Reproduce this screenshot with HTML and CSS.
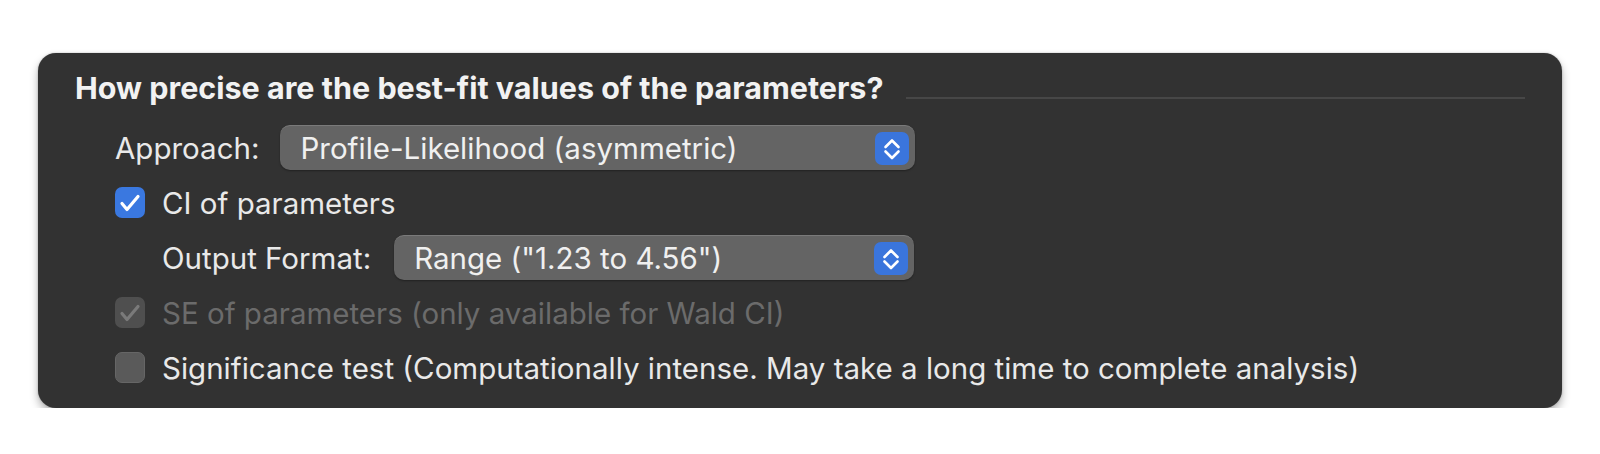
FILE: index.html
```html
<!DOCTYPE html>
<html>
<head>
<meta charset="utf-8">
<link rel="stylesheet" href="styles.css">
</head>
<body>
<div class="panel">
  <div class="heading-row">
    <div class="heading">How precise are the best-fit values of the parameters?</div>
    <div class="rule"></div>
  </div>
  <div class="rows">
    <div class="row indent1">
      <span class="label">Approach:</span>
      <div class="popup">
        <span class="popup-text">Profile-Likelihood (asymmetric)</span>
        <span class="stepper"><svg viewBox="0 0 34 33" width="34" height="33"><path d="M10.5 15 L17 8.5 L23.5 15 M10.5 19.5 L17 26 L23.5 19.5" fill="none" stroke="#fff" stroke-width="2.6" stroke-linecap="round" stroke-linejoin="round"/></svg></span>
      </div>
    </div>
    <div class="row indent1">
      <span class="checkbox checked"><svg viewBox="0 0 30 31" width="30" height="31"><path d="M7 16.5 L12 22.5 L23 9.5" fill="none" stroke="#fff" stroke-width="3.2" stroke-linecap="round" stroke-linejoin="round"/></svg></span>
      <span class="label">CI of parameters</span>
    </div>
    <div class="row indent2">
      <span class="label">Output Format:</span>
      <div class="popup popup-short">
        <span class="popup-text">Range ("1.23 to 4.56")</span>
        <span class="stepper"><svg viewBox="0 0 34 33" width="34" height="33"><path d="M10.5 15 L17 8.5 L23.5 15 M10.5 19.5 L17 26 L23.5 19.5" fill="none" stroke="#fff" stroke-width="2.6" stroke-linecap="round" stroke-linejoin="round"/></svg></span>
      </div>
    </div>
    <div class="row indent1 disabled">
      <span class="checkbox dis"><svg viewBox="0 0 30 31" width="30" height="31"><path d="M7 16.5 L12 22.5 L23 9.5" fill="none" stroke="#7a7a7a" stroke-width="3.2" stroke-linecap="round" stroke-linejoin="round"/></svg></span>
      <span class="label">SE of parameters (only available for Wald CI)</span>
    </div>
    <div class="row indent1">
      <span class="checkbox empty"></span>
      <span class="label">Significance test (Computationally intense. May take a long time to complete analysis)</span>
    </div>
  </div>
</div>
</body>
</html>
```
FILE: styles.css
```css
* { box-sizing: border-box; }
html, body { margin: 0; padding: 0; background: #ffffff; }
body {
  font-family: Inter, "Noto Sans", "Liberation Sans", sans-serif;
  color: #ececec;
}
.panel {
  margin: 53px 0 0 38px;
  width: 1524px;
  height: 355px;
  background: #323232;
  border-radius: 18px;
  box-shadow: 0 5px 9px rgba(0,0,0,0.3), 0 0 2px rgba(0,0,0,0.25);
  padding: 20px 37px 0 37px;
}
.heading-row {
  display: flex;
  align-items: flex-end;
  height: 30px;
  margin-bottom: 22px;
}
.heading {
  font-size: 30.5px;
  font-weight: 700;
  line-height: 30px;
  color: #f2f2f2;
  white-space: nowrap;
}
.rule {
  flex: 1;
  height: 2px;
  background: #474747;
  margin-left: 22px;
  margin-bottom: 4px;
}
.rows {
  display: flex;
  flex-direction: column;
  gap: 10px;
}
.row {
  display: flex;
  align-items: center;
  height: 45px;
}
.indent1 { padding-left: 40px; }
.indent2 { padding-left: 87px; }
.label {
  font-size: 29.5px;
  white-space: nowrap;
  color: #e9e9e9;
}
.popup {
  display: flex;
  align-items: center;
  justify-content: space-between;
  width: 635px;
  height: 45px;
  margin-left: 21px;
  background: #646464;
  border-radius: 10px;
  border-top: 1px solid #7a7a7a;
  box-shadow: 0 1px 2px rgba(0,0,0,0.35);
  padding-left: 20px;
  padding-right: 6px;
}
.popup-short { width: 520px; margin-left: 23px; }
.popup-text {
  font-size: 29.5px;
  color: #f0f0f0;
  white-space: nowrap;
}
.stepper {
  width: 34px;
  height: 33px;
  border-radius: 7px;
  background: #3a75dc;
  display: flex;
}
.checkbox {
  width: 30px;
  height: 31px;
  border-radius: 7px;
  margin-right: 17px;
  display: flex;
  flex: none;
}
.checked { background: #3a78e0; }
.dis { background: #4f4f4f; }
.empty { background: #5a5a5a; border: 1px solid #666; }
.disabled .label { color: #6b6b6b; }
```
